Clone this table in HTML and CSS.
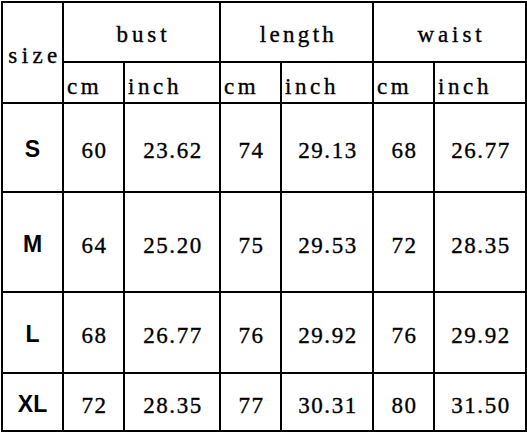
FILE: index.html
```html
<!DOCTYPE html>
<html lang="en">
<head>
<meta charset="utf-8">
<title>Size chart</title>
<link rel="stylesheet" href="styles.css">
</head>
<body>
<div class="chart">
  <div class="cell head size-head">size</div>
  <div class="cell head group">bust</div>
  <div class="cell head group length">length</div>
  <div class="cell head group">waist</div>

  <div class="cell unit">cm</div>
  <div class="cell unit">inch</div>
  <div class="cell unit">cm</div>
  <div class="cell unit">inch</div>
  <div class="cell unit">cm</div>
  <div class="cell unit">inch</div>

  <div class="cell size">S</div>
  <div class="cell num">60</div>
  <div class="cell num">23.62</div>
  <div class="cell num">74</div>
  <div class="cell num">29.13</div>
  <div class="cell num">68</div>
  <div class="cell num">26.77</div>

  <div class="cell size">M</div>
  <div class="cell num">64</div>
  <div class="cell num">25.20</div>
  <div class="cell num">75</div>
  <div class="cell num">29.53</div>
  <div class="cell num">72</div>
  <div class="cell num">28.35</div>

  <div class="cell size">L</div>
  <div class="cell num">68</div>
  <div class="cell num">26.77</div>
  <div class="cell num">76</div>
  <div class="cell num">29.92</div>
  <div class="cell num">76</div>
  <div class="cell num">29.92</div>

  <div class="cell size">XL</div>
  <div class="cell num">72</div>
  <div class="cell num">28.35</div>
  <div class="cell num">77</div>
  <div class="cell num">30.31</div>
  <div class="cell num">80</div>
  <div class="cell num">31.50</div>
</div>
</body>
</html>
```

FILE: styles.css
```css
html, body {
  margin: 0;
  padding: 0;
  background: #fff;
}

.chart {
  margin: 1px 0 0 1px;
  width: 526px;
  box-sizing: border-box;
  display: grid;
  grid-template-columns: 59px 59px 94px 59px 90px 59px 90px;
  grid-template-rows: 58px 39px 87px 98px 79px 56px;
  gap: 2px;
  padding: 2px;
  background: #000;
  font-family: "Liberation Serif", "Times New Roman", serif;
  color: #000;
}

.cell {
  background: #fff;
  display: flex;
  align-items: center;
  justify-content: center;
  box-sizing: border-box;
  font-size: 23px;
  line-height: 1;
  -webkit-text-stroke: 0.35px #000;
}

.head {
  letter-spacing: 3.9px;
  padding-left: 4px;
  padding-top: 4px;
}

.length {
  letter-spacing: 3.3px;
}

.size-head {
  grid-row: span 2;
  letter-spacing: 4.4px;
  padding-left: 5px;
  padding-top: 6px;
}

.group {
  grid-column: span 2;
}

.unit {
  justify-content: flex-start;
  padding-left: 3px;
  padding-top: 7px;
  letter-spacing: 3.6px;
}

.num {
  letter-spacing: 1.6px;
  padding-left: 2px;
  padding-top: 6px;
}

.size {
  font-family: "Liberation Sans", Arial, sans-serif;
  font-weight: bold;
  font-size: 23px;
  padding-top: 4px;
  -webkit-text-stroke: 0;
}
```
